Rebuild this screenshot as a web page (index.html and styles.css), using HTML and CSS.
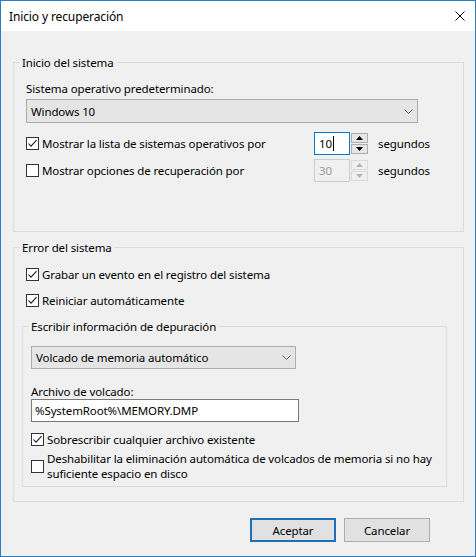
FILE: index.html
```html
<!DOCTYPE html>
<html lang="es">
<head>
<meta charset="utf-8">
<title>Inicio y recuperación</title>
<link rel="stylesheet" href="styles.css">
</head>
<body>
<div class="window">
  <div class="titlebar">
    <span class="title">Inicio y recuperación</span>
    <svg class="close" width="10" height="10" viewBox="0 0 10 10"><path d="M0.5 0.5 L9.5 9.5 M9.5 0.5 L0.5 9.5" stroke="#000" stroke-width="1" fill="none"/></svg>
  </div>
  <div class="content">
    <fieldset class="group group-boot">
      <legend>Inicio del sistema</legend>
      <div class="group-inner boot-inner">
        <div class="label first-label">Sistema operativo predeterminado:</div>
        <div class="combo combo-os">
          <span>Windows 10</span>
          <svg class="chev" width="9" height="5" viewBox="0 0 9 5"><path d="M0.5 0.5 L4.5 4.5 L8.5 0.5" stroke="#606060" stroke-width="1" fill="none"/></svg>
        </div>
        <div class="spin-row row-first">
          <div class="check check-wide">
            <span class="box"><svg width="11" height="11" viewBox="0 0 11 11"><path d="M1.5 5.5 L4 8.2 L9.6 2.2" stroke="#1a1a1a" stroke-width="1.1" fill="none"/></svg></span>
            <span class="check-text">Mostrar la lista de sistemas operativos por</span>
          </div>
          <div class="spin">
            <div class="spin-input focused"><span>10</span><span class="caret"></span></div>
            <div class="spin-arrows">
              <span class="arrow"><svg width="7" height="4" viewBox="0 0 7 4"><path d="M0 4 L3.5 0 L7 4 Z" fill="#000"/></svg></span>
              <span class="arrow"><svg width="7" height="4" viewBox="0 0 7 4"><path d="M0 0 L3.5 4 L7 0 Z" fill="#000"/></svg></span>
            </div>
          </div>
          <span class="unit">segundos</span>
        </div>
        <div class="spin-row row-second">
          <div class="check check-wide">
            <span class="box"></span>
            <span class="check-text">Mostrar opciones de recuperación por</span>
          </div>
          <div class="spin disabled">
            <div class="spin-input"><span>30</span></div>
            <div class="spin-arrows">
              <span class="arrow"><svg width="7" height="4" viewBox="0 0 7 4"><path d="M0 4 L3.5 0 L7 4 Z" fill="#b5b5b5"/></svg></span>
              <span class="arrow"><svg width="7" height="4" viewBox="0 0 7 4"><path d="M0 0 L3.5 4 L7 0 Z" fill="#b5b5b5"/></svg></span>
            </div>
          </div>
          <span class="unit">segundos</span>
        </div>
      </div>
    </fieldset>

    <fieldset class="group group-error">
      <legend>Error del sistema</legend>
      <div class="group-inner error-inner">
        <div class="check row-grabar">
          <span class="box"><svg width="11" height="11" viewBox="0 0 11 11"><path d="M1.5 5.5 L4 8.2 L9.6 2.2" stroke="#1a1a1a" stroke-width="1.1" fill="none"/></svg></span>
          <span class="check-text">Grabar un evento en el registro del sistema</span>
        </div>
        <div class="check row-reiniciar">
          <span class="box"><svg width="11" height="11" viewBox="0 0 11 11"><path d="M1.5 5.5 L4 8.2 L9.6 2.2" stroke="#1a1a1a" stroke-width="1.1" fill="none"/></svg></span>
          <span class="check-text">Reiniciar automáticamente</span>
        </div>
        <fieldset class="group group-debug">
          <legend>Escribir información de depuración</legend>
          <div class="group-inner debug-inner">
            <div class="combo combo-dump">
              <span>Volcado de memoria automático</span>
              <svg class="chev" width="9" height="5" viewBox="0 0 9 5"><path d="M0.5 0.5 L4.5 4.5 L8.5 0.5" stroke="#606060" stroke-width="1" fill="none"/></svg>
            </div>
            <div class="label dump-label">Archivo de volcado:</div>
            <div class="textbox">%SystemRoot%\MEMORY.DMP</div>
            <div class="check row-overwrite">
              <span class="box"><svg width="11" height="11" viewBox="0 0 11 11"><path d="M1.5 5.5 L4 8.2 L9.6 2.2" stroke="#1a1a1a" stroke-width="1.1" fill="none"/></svg></span>
              <span class="check-text">Sobrescribir cualquier archivo existente</span>
            </div>
            <div class="check row-disable">
              <span class="box"></span>
              <span class="check-text multi">Deshabilitar la eliminación automática de volcados de memoria si no hay suficiente espacio en disco</span>
            </div>
          </div>
        </fieldset>
      </div>
    </fieldset>

    <div class="buttons">
      <span class="btn btn-default">Aceptar</span>
      <span class="btn">Cancelar</span>
    </div>
  </div>
</div>
</body>
</html>
```

FILE: styles.css
```css
* {
  box-sizing: border-box;
}

body {
  margin: 0;
  font-family: "Segoe UI", "Noto Sans", "DejaVu Sans", sans-serif;
  font-size: 11.5px;
  letter-spacing: -0.12px;
  line-height: 15px;
  color: #000;
}

.window {
  width: 476px;
  height: 557px;
  border: 1px solid #2b7cc0;
  background: #f0f0f0;
  display: flex;
  flex-direction: column;
}

.titlebar {
  height: 30px;
  background: #fff;
  display: flex;
  align-items: center;
  justify-content: space-between;
  padding: 0 10px 0 8px;
  flex: none;
}

.title {
  font-size: 12px;
}

.content {
  padding: 23px 11px 0 12px;
}

.group {
  margin: 0;
  padding: 0;
  min-width: 0;
  border: 1px solid #dcdcdc;
}

.group legend {
  padding: 0 2px;
  margin-left: 6px;
  line-height: 17px;
}

.boot-inner {
  padding: 0 0 49px 12px;
}

.label {
  white-space: nowrap;
}

.first-label {
  margin-top: 10px;
}

.combo {
  display: flex;
  align-items: center;
  justify-content: space-between;
  background: #e5e5e5;
  border: 1px solid #adadad;
  padding: 0 4px 0 4px;
}

.combo-os {
  margin-top: 3px;
  width: 392px;
  height: 24px;
}

.spin-row {
  display: flex;
  align-items: center;
  height: 23px;
}

.row-first {
  margin-top: 9px;
}

.row-second {
  margin-top: 4px;
}

.check {
  display: flex;
  align-items: center;
  white-space: nowrap;
}

.check-wide {
  width: 288px;
}

.box {
  width: 13px;
  height: 13px;
  border: 1px solid #333;
  background: #fff;
  flex: none;
  margin-right: 3px;
  display: flex;
}

.check-text.multi {
  white-space: normal;
  width: 392px;
  line-height: 15px;
}

.spin {
  display: flex;
  align-items: flex-start;
  height: 23px;
}

.spin-input {
  width: 36px;
  height: 23px;
  background: #fff;
  border: 1px solid #7a7a7a;
  padding: 3px 0 0 4px;
  display: flex;
  align-items: flex-start;
}

.spin-input.focused {
  border-color: #0078d7;
}

.caret {
  width: 1px;
  height: 15px;
  margin-left: 1px;
  background: #000;
}

.spin-arrows {
  width: 17px;
  height: 21px;
  margin: 1px 0 0 1px;
  display: flex;
  flex-direction: column;
}

.arrow {
  height: 10px;
  border: 1px solid #adadad;
  background: #e5e5e5;
  display: flex;
  align-items: center;
  justify-content: center;
}

.arrow + .arrow {
  margin-top: 1px;
}

.spin.disabled .spin-input {
  background: #f0f0f0;
  border-color: #cccccc;
  color: #9a9a9a;
}

.spin.disabled .arrow {
  border-color: #d9d9d9;
  background: #f0f0f0;
}

.unit {
  margin-left: 10px;
}

.group-error {
  margin-top: 7px;
}

.error-inner {
  padding: 0 16px 14px 8px;
}

.error-inner > .check {
  margin-left: 4px;
  height: 15px;
}

.row-grabar {
  margin-top: 11px;
}

.row-reiniciar {
  margin-top: 11px;
}

.group-debug {
  margin-top: 10px;
}

.debug-inner {
  padding: 0 0 5px 8px;
}

.combo-dump {
  margin-top: 11px;
  width: 265px;
  height: 23px;
}

.dump-label {
  margin-top: 15px;
}

.textbox {
  width: 268px;
  height: 23px;
  background: #fff;
  border: 1px solid #7a7a7a;
  padding: 3px 0 0 3px;
}

.row-overwrite {
  margin-top: 10px;
  height: 15px;
}

.row-disable {
  margin-top: 4px;
}

.buttons {
  margin-top: 16px;
  display: flex;
  justify-content: flex-end;
  gap: 8px;
  padding-right: 34px;
}

.btn {
  width: 86px;
  height: 24px;
  background: #e1e1e1;
  border: 1px solid #adadad;
  display: flex;
  align-items: center;
  justify-content: center;
}

.btn-default {
  border: 2px solid #1f70b5;
}
```
